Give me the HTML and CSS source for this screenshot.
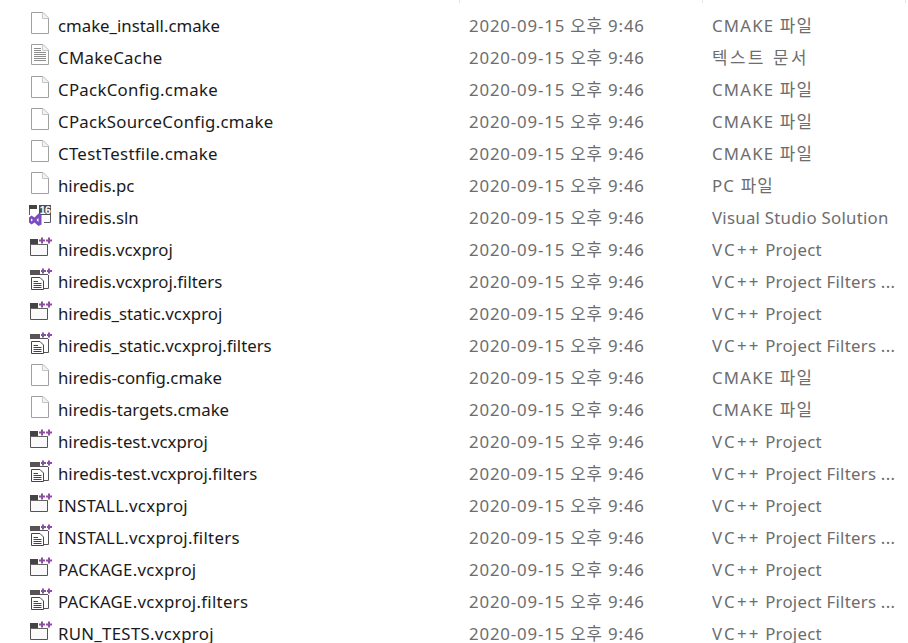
FILE: index.html
```html
<!doctype html>
<html lang="ko">
<head>
	<meta charset="UTF-8">
	<title>hiredis build</title>
	<link rel="stylesheet" href="styles.css">
</head>
<body>
<svg class="defs" width="0" height="0">
	<symbol id="i-file" viewBox="0 0 24 24">
		<path d="M3.5 1.5H15L20.5 7V22.5H3.5Z" fill="#fff" stroke="#a0a0a0"/>
		<path d="M14.5 1.5V7.5H20.5" fill="#f4f4f4" stroke="#c4c4c4"/>
	</symbol>
	<symbol id="i-text" viewBox="0 0 24 24">
		<path d="M3.5 1.5H15L20.5 7V21.5H3.5Z" fill="#fff" stroke="#a0a0a0"/>
		<path d="M14.5 1.5V7.5H20.5" fill="#f4f4f4" stroke="#c4c4c4"/>
		<path d="M6 5.500H13M6 7.500H13M6 9.500H18M6 11.500H18M6 13.500H18M6 15.500H18M6 17.500H18" stroke="#8c8c8c"/>
	</symbol>
	<symbol id="i-proj" viewBox="0 0 24 24">
		<path d="M2.500 5.500H19.500V20.500H2.500Z" fill="#fafafa" stroke="#555"/>
		<rect x="2" y="4" width="13" height="5" fill="#444"/>
		<path d="M2 9.500H20" stroke="#666"/>
		<rect x="10" y="1" width="14" height="8" fill="#fff"/>
		<path d="M14 2.500V8.500M11 5.500H17M21 2.500V8.500M18 5.500H24" stroke="#8e4ea3" stroke-width="2"/>
	</symbol>
	<symbol id="i-filter" viewBox="0 0 24 24">
		<rect x="2" y="3" width="18" height="5" fill="#555"/>
		<path d="M20.500 8V21.500H16" fill="none" stroke="#555"/>
		<rect x="12" y="0" width="12" height="7" fill="#fff"/>
		<path d="M15 1.500V6.500M13 4H18M21 1.500V6.500M19 4H24" stroke="#8e4ea3" stroke-width="2"/>
		<path d="M3.500 10.500H12L15.500 14V22.500H3.500Z" fill="#fff" stroke="#444"/>
		<path d="M5.500 14.500H10M5.500 16.500H13.500M5.500 18.500H13.500M5.500 20.500H13.500" stroke="#444"/>
	</symbol>
</svg>

<div class="list">
	<div class="ticks"><span></span><span></span><span></span></div>

	<div class="row"><div class="name"><svg class="ico"><use href="#i-file"/></svg>cmake_install.cmake</div><div class="date">2020-09-15 오후 9:46</div><div class="type ko">CMAKE 파일</div></div>
	<div class="row"><div class="name up"><svg class="ico"><use href="#i-text"/></svg>CMakeCache</div><div class="date">2020-09-15 오후 9:46</div><div class="type doc">텍스트 문서</div></div>
	<div class="row"><div class="name up"><svg class="ico"><use href="#i-file"/></svg>CPackConfig.cmake</div><div class="date">2020-09-15 오후 9:46</div><div class="type ko">CMAKE 파일</div></div>
	<div class="row"><div class="name up"><svg class="ico"><use href="#i-file"/></svg>CPackSourceConfig.cmake</div><div class="date">2020-09-15 오후 9:46</div><div class="type ko">CMAKE 파일</div></div>
	<div class="row"><div class="name up"><svg class="ico"><use href="#i-file"/></svg>CTestTestfile.cmake</div><div class="date">2020-09-15 오후 9:46</div><div class="type ko">CMAKE 파일</div></div>
	<div class="row"><div class="name"><svg class="ico"><use href="#i-file"/></svg>hiredis.pc</div><div class="date">2020-09-15 오후 9:46</div><div class="type ko">PC 파일</div></div>
	<div class="row"><div class="name"><svg class="ico" viewBox="0 0 24 24">
		<path d="M1.500 12V3.500H9" fill="none" stroke="#5a5a5a"/>
		<rect x="1" y="2" width="8" height="4" fill="#444"/>
		<rect x="11" y="2" width="12" height="10" fill="#4d4d4d"/>
		<text x="17" y="11" class="ico-num">16</text>
		<path d="M22.500 12V19.500H16" fill="none" stroke="#5a5a5a"/>
		<path d="M1 14.500L3.500 12.500L6.500 14.500L10.500 10.500L13.500 12V21.500L10.500 23L6.500 19.500L3.500 21.500L1 19.500ZM3 15.500V18.500L5 17ZM8.500 17L10.500 19V15Z" fill="#7b4cc0" fill-rule="evenodd"/>
	</svg>hiredis.sln</div><div class="date">2020-09-15 오후 9:46</div><div class="type">Visual Studio Solution</div></div>
	<div class="row"><div class="name"><svg class="ico"><use href="#i-proj"/></svg>hiredis.vcxproj</div><div class="date">2020-09-15 오후 9:46</div><div class="type"><span class="vc">VC++</span> Project</div></div>
	<div class="row"><div class="name"><svg class="ico"><use href="#i-filter"/></svg>hiredis.vcxproj.filters</div><div class="date">2020-09-15 오후 9:46</div><div class="type"><span class="vc">VC++</span> Project Filters ...</div></div>
	<div class="row"><div class="name"><svg class="ico"><use href="#i-proj"/></svg>hiredis_static.vcxproj</div><div class="date">2020-09-15 오후 9:46</div><div class="type"><span class="vc">VC++</span> Project</div></div>
	<div class="row"><div class="name"><svg class="ico"><use href="#i-filter"/></svg>hiredis_static.vcxproj.filters</div><div class="date">2020-09-15 오후 9:46</div><div class="type"><span class="vc">VC++</span> Project Filters ...</div></div>
	<div class="row"><div class="name"><svg class="ico"><use href="#i-file"/></svg>hiredis-config.cmake</div><div class="date">2020-09-15 오후 9:46</div><div class="type ko">CMAKE 파일</div></div>
	<div class="row"><div class="name"><svg class="ico"><use href="#i-file"/></svg>hiredis-targets.cmake</div><div class="date">2020-09-15 오후 9:46</div><div class="type ko">CMAKE 파일</div></div>
	<div class="row"><div class="name"><svg class="ico"><use href="#i-proj"/></svg>hiredis-test.vcxproj</div><div class="date">2020-09-15 오후 9:46</div><div class="type"><span class="vc">VC++</span> Project</div></div>
	<div class="row"><div class="name"><svg class="ico"><use href="#i-filter"/></svg>hiredis-test.vcxproj.filters</div><div class="date">2020-09-15 오후 9:46</div><div class="type"><span class="vc">VC++</span> Project Filters ...</div></div>
	<div class="row"><div class="name up"><svg class="ico"><use href="#i-proj"/></svg>INSTALL.vcxproj</div><div class="date">2020-09-15 오후 9:46</div><div class="type"><span class="vc">VC++</span> Project</div></div>
	<div class="row"><div class="name up"><svg class="ico"><use href="#i-filter"/></svg>INSTALL.vcxproj.filters</div><div class="date">2020-09-15 오후 9:46</div><div class="type"><span class="vc">VC++</span> Project Filters ...</div></div>
	<div class="row"><div class="name up"><svg class="ico"><use href="#i-proj"/></svg>PACKAGE.vcxproj</div><div class="date">2020-09-15 오후 9:46</div><div class="type"><span class="vc">VC++</span> Project</div></div>
	<div class="row"><div class="name up"><svg class="ico"><use href="#i-filter"/></svg>PACKAGE.vcxproj.filters</div><div class="date">2020-09-15 오후 9:46</div><div class="type"><span class="vc">VC++</span> Project Filters ...</div></div>
	<div class="row"><div class="name up"><svg class="ico"><use href="#i-proj"/></svg>RUN_TESTS.vcxproj</div><div class="date">2020-09-15 오후 9:46</div><div class="type"><span class="vc">VC++</span> Project</div></div>
</div>
</body>
</html>
```

FILE: styles.css
```css
html,body{margin: 0;padding: 0;background: #fff;}
body{height: 643px;overflow: hidden;font-family: "Noto Sans","Noto Sans CJK KR",sans-serif;font-size: 16.8px;}
.defs{display: block;height: 0;}
.list{width: 908px;}

/* column separators, cut off at the top of the window */
.ticks{display: grid;grid-template-columns: 460px 243px 203px;height: 3px;margin-bottom: 7px;}
.ticks span{border-right: 1px solid #e5e5e5;}

.row{display: grid;grid-template-columns: 459px 243px 196px;height: 32px;line-height: 32px;white-space: nowrap;}
.name{display: flex;align-items: center;padding-left: 28px;color: #1a1a1a;}
.name.up{letter-spacing: 0.3px;}
.date,.type{padding-left: 10px;color: #6d6d6d;}
.date{letter-spacing: 0.85px;}
.type{letter-spacing: 0.27px;}
.type.ko{letter-spacing: 1.2px;}
.type.doc{letter-spacing: 2.6px;}
.vc{letter-spacing: 2.2px;}
.ico{flex: none;width: 24px;height: 24px;margin: -6px 6px 0 0;}
.ico-num{font-family: "Liberation Sans",sans-serif;font-size: 10.500px;font-weight: bold;letter-spacing: -0.5px;fill: #fff;text-anchor: middle;}
```
